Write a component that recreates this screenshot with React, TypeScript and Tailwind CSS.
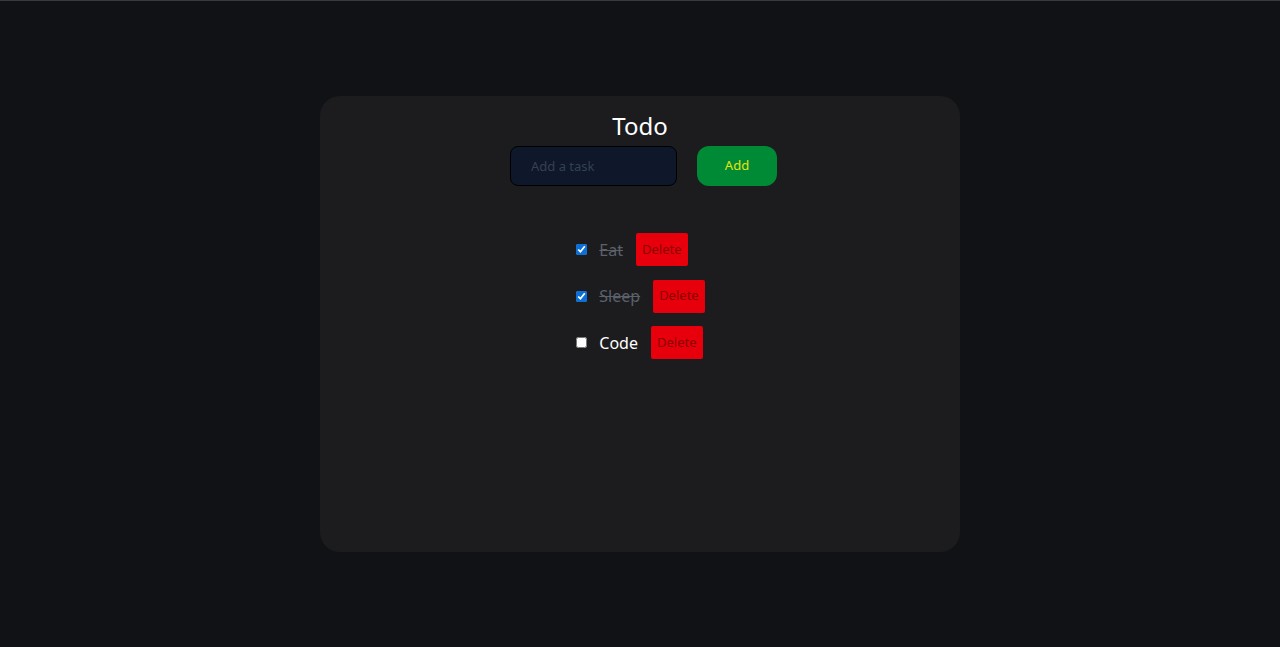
import React, { useState } from "react";

export default function App() {
  const [todos, setTodos] = useState([
    { id: 1, text: "Eat", done: true },
    { id: 2, text: "Sleep", done: true },
    { id: 3, text: "Code", done: false },
  ]);
  const [value, setValue] = useState("");

  return (
    <div
      className="min-h-[647px] bg-[#111215] border-t border-[#3a3a3c] pt-[95px]"
      style={{ fontFamily: '"Noto Sans", "Open Sans", sans-serif' }}
    >
      <div className="mx-auto w-[640px] h-[456px] rounded-[20px] bg-[#1c1c1e] flex flex-col items-center pt-[14px]">
        <h1 className="text-[24px] leading-[32px] text-white">Todo</h1>
        <div className="flex items-center gap-[20px] mt-[4px] ml-[7px]">
          <input
            value={value}
            onChange={(e) => setValue(e.target.value)}
            placeholder="Add a task"
            className="w-[167px] h-[40px] rounded-[8px] bg-[#0f172a] border border-black px-[20px] text-[13px] text-white placeholder:text-[#334155] outline-none"
          />
          <button className="w-[80px] h-[40px] rounded-[12px] bg-[#008a35] text-[13px] text-[#e5e510]">
            Add
          </button>
        </div>
        <ul className="mt-[47px] flex flex-col gap-[13.5px]">
          {todos.map((t) => (
            <li key={t.id} className="flex items-center">
              <input
                type="checkbox"
                checked={t.done}
                onChange={() =>
                  setTodos(todos.map((x) => (x.id === t.id ? { ...x, done: !x.done } : x)))
                }
                className="w-[11px] h-[11px] m-0 ml-[1px] accent-[#0b6fd6]"
              />
              <span
                className={
                  "ml-[12px] text-[16px] " +
                  (t.done ? "line-through text-[#5b606b]" : "text-white")
                }
              >
                {t.text}
              </span>
              <button className="ml-[13px] h-[33px] px-[6px] rounded-[2px] bg-[#e7000b] text-[13px] text-[#8a0000]">
                Delete
              </button>
            </li>
          ))}
        </ul>
      </div>
    </div>
  );
}
